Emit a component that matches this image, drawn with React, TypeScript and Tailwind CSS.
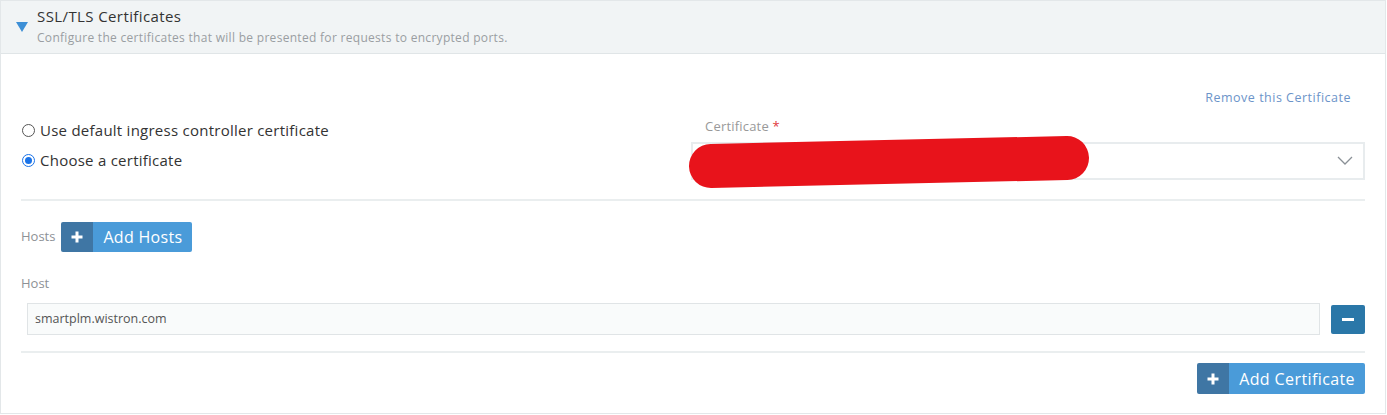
import { useState } from "react";

const Plus = () => (
  <svg width="12" height="12" viewBox="0 0 12 12">
    <rect x="4.5" y="0.5" width="3" height="11" fill="white" />
    <rect x="0.5" y="4.5" width="11" height="3" fill="white" />
  </svg>
);

const Radio = ({ checked, label, onClick }: { checked: boolean; label: string; onClick: () => void }) => (
  <label className="flex items-center gap-[5px] cursor-pointer h-[30px]" onClick={onClick}>
    <span
      className={
        checked
          ? "w-[13px] h-[13px] rounded-full border-[1.5px] border-[#1a73e8] flex items-center justify-center"
          : "w-[13px] h-[13px] rounded-full border-[1.5px] border-[#555] flex items-center justify-center"
      }
    >
      {checked && <span className="w-[7px] h-[7px] rounded-full bg-[#1a73e8]" />}
    </span>
    <span className="text-[15px] tracking-[0.25px] text-[#333]">{label}</span>
  </label>
);

export default function App() {
  const [mode, setMode] = useState("choose");

  return (
    <div className="w-[1386px] h-[414px] bg-white border border-[#e3e7e9] font-['Open_Sans','Lato',sans-serif]">
      {/* Header */}
      <div className="h-[53px] bg-[#f1f4f5] border-b border-[#e0e5e7] flex items-start pl-[15px] pt-[5px]">
        <svg width="12" height="10" viewBox="0 0 12 10" className="mt-[16px]">
          <path d="M0 0 L12 0 L6 10 Z" fill="#3d8fd6" />
        </svg>
        <div className="ml-[9px]">
          <div className="text-[15px] leading-[20px] tracking-[0.4px] text-[#333]">SSL/TLS Certificates</div>
          <div className="text-[12px] leading-[16px] mt-[4px] tracking-[0.3px] text-[#9a9ea2]">
            Configure the certificates that will be presented for requests to encrypted ports.
          </div>
        </div>
      </div>

      {/* Body */}
      <div className="px-[20px] pt-[36px]">
        <div className="flex justify-end pr-[14px]">
          <a href="#" className="text-[12.5px] leading-[16px] tracking-[0.5px] text-[#6c94c9]">
            Remove this Certificate
          </a>
        </div>

        <div className="grid grid-cols-[670px_1fr] mt-[8px]">
          <div className="pt-[1px] pl-[1px]">
            <Radio checked={mode === "default"} label="Use default ingress controller certificate" onClick={() => setMode("default")} />
            <Radio checked={mode === "choose"} label="Choose a certificate" onClick={() => setMode("choose")} />
          </div>
          <div className="relative pt-[3px]">
            <div className="text-[13px] leading-[18px] tracking-[0.2px] text-[#999] pl-[14px]">
              Certificate <span className="text-[#e0373b]">*</span>
            </div>
            <div className="mt-[7px] h-[38px] border-2 border-[#e8ecee] flex items-center justify-end pr-[10px]">
              <svg width="16" height="10" viewBox="0 0 16 10">
                <path d="M1 1 L8 8 L15 1" fill="none" stroke="#8a9096" strokeWidth="1.3" />
              </svg>
            </div>
            <svg className="absolute left-[-4px] top-[20px]" width="410" height="56" viewBox="0 0 410 56">
              <path d="M24 32 L380 24" stroke="#e8131b" strokeWidth="44" strokeLinecap="round" fill="none" />
            </svg>
          </div>
        </div>

        <div className="h-[2px] bg-[#eaeeef] mt-[19px]" />

        <div className="flex items-center mt-[21px]">
          <span className="text-[13px] text-[#8d9196] mr-[6px]">Hosts</span>
          <button className="flex h-[30px] rounded-[2px] overflow-hidden">
            <span className="w-[32px] bg-[#3f76a4] flex items-center justify-center">
              <Plus />
            </span>
            <span className="bg-[#4a9bd9] text-white text-[16px] tracking-[0.3px] pl-[10px] pr-[10px] flex items-center">
              Add Hosts
            </span>
          </button>
        </div>

        <div className="text-[13px] text-[#8d9196] mt-[22px] leading-[18px]">Host</div>

        <div className="flex items-center mt-[11px] pl-[6px]">
          <div className="flex-1 h-[32px] bg-[#f9fbfb] border border-[#e0e4e6] flex items-center pl-[7px] text-[12.5px] text-[#555]">
            smartplm.wistron.com
          </div>
          <button className="ml-[11px] w-[34px] h-[29px] bg-[#2a77a8] rounded-[2px] flex items-center justify-center">
            <span className="w-[12px] h-[3px] bg-white" />
          </button>
        </div>

        <div className="h-[2px] bg-[#eaeeef] mt-[16px]" />

        <div className="flex justify-end mt-[10px]">
          <button className="flex h-[31px] rounded-[2px] overflow-hidden">
            <span className="w-[32px] bg-[#3f76a4] flex items-center justify-center">
              <Plus />
            </span>
            <span className="bg-[#4a9bd9] text-white text-[16px] tracking-[0.4px] pl-[10px] pr-[10px] flex items-center">
              Add Certificate
            </span>
          </button>
        </div>
      </div>
    </div>
  );
}
